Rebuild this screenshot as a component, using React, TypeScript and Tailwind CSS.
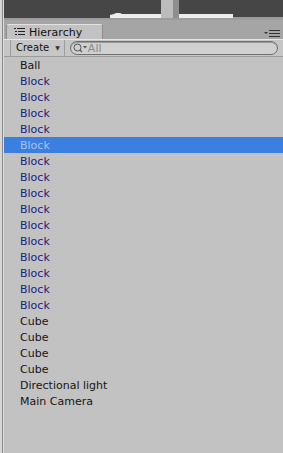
import React from 'react';

const rows: { name: string; prefab?: boolean }[] = [
  { name: 'Ball' },
  ...Array.from({ length: 15 }, () => ({ name: 'Block', prefab: true })),
  { name: 'Cube' },
  { name: 'Cube' },
  { name: 'Cube' },
  { name: 'Cube' },
  { name: 'Directional light' },
  { name: 'Main Camera' },
];

const SELECTED = 5;

const SceneStrip: React.FC = () => (
  <svg width="279" height="20" viewBox="0 0 279 20" className="block">
    <rect x="0" y="0" width="279" height="20" fill="#464646" />
    <path d="M106 15 L110 14 L112 13 L116 13 L118 14 L229 14 L229 18 L106 18 Z" fill="#ececec" />
    <rect x="229" y="17" width="50" height="1" fill="#9a9a9a" />
    <rect x="157" y="0" width="12" height="18" fill="#bcbcbc" />
    <rect x="169" y="0" width="6" height="18" fill="#8e8e8e" />
    <rect x="0" y="18" width="279" height="2" fill="#9c9c9c" />
  </svg>
);

const ListIcon: React.FC = () => (
  <svg width="11" height="8" viewBox="0 0 11 8" className="block">
    <rect x="0" y="0" width="2" height="1" fill="#222" />
    <rect x="3" y="0" width="8" height="1" fill="#222" />
    <rect x="1" y="3" width="2" height="1" fill="#222" />
    <rect x="4" y="3" width="7" height="1" fill="#222" />
    <rect x="1" y="6" width="2" height="1" fill="#222" />
    <rect x="4" y="6" width="7" height="1" fill="#222" />
  </svg>
);

const MenuIcon: React.FC = () => (
  <svg width="16" height="7" viewBox="0 0 16 7" className="block">
    <path d="M0 2 L4 2 L2 4 Z" fill="#333" />
    <rect x="5" y="0" width="11" height="1" fill="#333" />
    <rect x="5" y="3" width="11" height="1" fill="#333" />
    <rect x="5" y="6" width="11" height="1" fill="#333" />
  </svg>
);

const SearchIcon: React.FC = () => (
  <svg width="15" height="10" viewBox="0 0 15 10" className="block">
    <circle cx="4.5" cy="4.5" r="3.5" fill="none" stroke="#555" strokeWidth="1" />
    <path d="M7 7 L9 9" stroke="#555" strokeWidth="1.3" />
    <path d="M10 3 L14 3 L12 5.5 Z" fill="#555" />
  </svg>
);

export default function App() {
  return (
    <div
      className="flex h-[453px] w-[283px] overflow-hidden bg-[#c2c2c2]"
      style={{ fontFamily: '"DejaVu Sans", Verdana, sans-serif' }}
    >
      <div className="w-[2px] bg-[#d6d6d6]" />
      <div className="w-[1px] bg-[#8a8a8a]" />
      <div className="w-[1px] bg-[#dcdcdc]" />
      <div className="flex min-w-0 flex-1 flex-col">
        <SceneStrip />

        {/* tab bar */}
        <div className="flex h-[19px] items-end bg-[#a5a5a5] pl-[2px]">
          <div className="flex h-[15px] w-[97px] items-center gap-[4px] rounded-t-[3px] border-x border-t border-x-[#8c8c8c] border-t-[#e2e2e2] bg-[#c2c2c2] pl-[7px] text-[11px] leading-none text-[#111]">
            <ListIcon />
            <span className="pt-[1px]">Hierarchy</span>
          </div>
          <div className="flex-1" />
          <div className="mb-[2px] mr-[3px]">
            <MenuIcon />
          </div>
        </div>

        {/* toolbar */}
        <div className="flex h-[18px] items-center border-b border-t border-b-[#9a9a9a] border-t-[#e6e6e6] bg-[#c6c6c6]">
          <div className="ml-[6px] flex h-full items-center border-x border-x-[#9c9c9c] pl-[5px] pr-[4px] text-[10px] leading-none text-[#111]">
            <span>Create</span>
            <span className="ml-[6px] text-[6px] text-[#333]">▼</span>
          </div>
          <div className="ml-[5px] mr-[5px] flex h-[14px] flex-1 items-center rounded-full border border-[#6f6f6f] bg-[#d0d0d0] pl-[2px] shadow-[inset_0_1px_0_#9a9a9a]">
            <SearchIcon />
            <span className="text-[11px] leading-none text-[#8a8a8a]">All</span>
          </div>
        </div>

        {/* hierarchy list */}
        <div className="flex flex-col">
          {rows.map((r, i) => {
            const sel = i === SELECTED;
            return (
              <div
                key={i}
                className={`flex h-[16px] items-center pl-[16px] pt-[1px] text-[11px] leading-none ${
                  sel ? 'bg-[#3b7fe0] text-[#a9c3ec]' : r.prefab ? 'text-[#14247c]' : 'text-[#151515]'
                }`}
              >
                {r.name}
              </div>
            );
          })}
        </div>
      </div>
    </div>
  );
}
